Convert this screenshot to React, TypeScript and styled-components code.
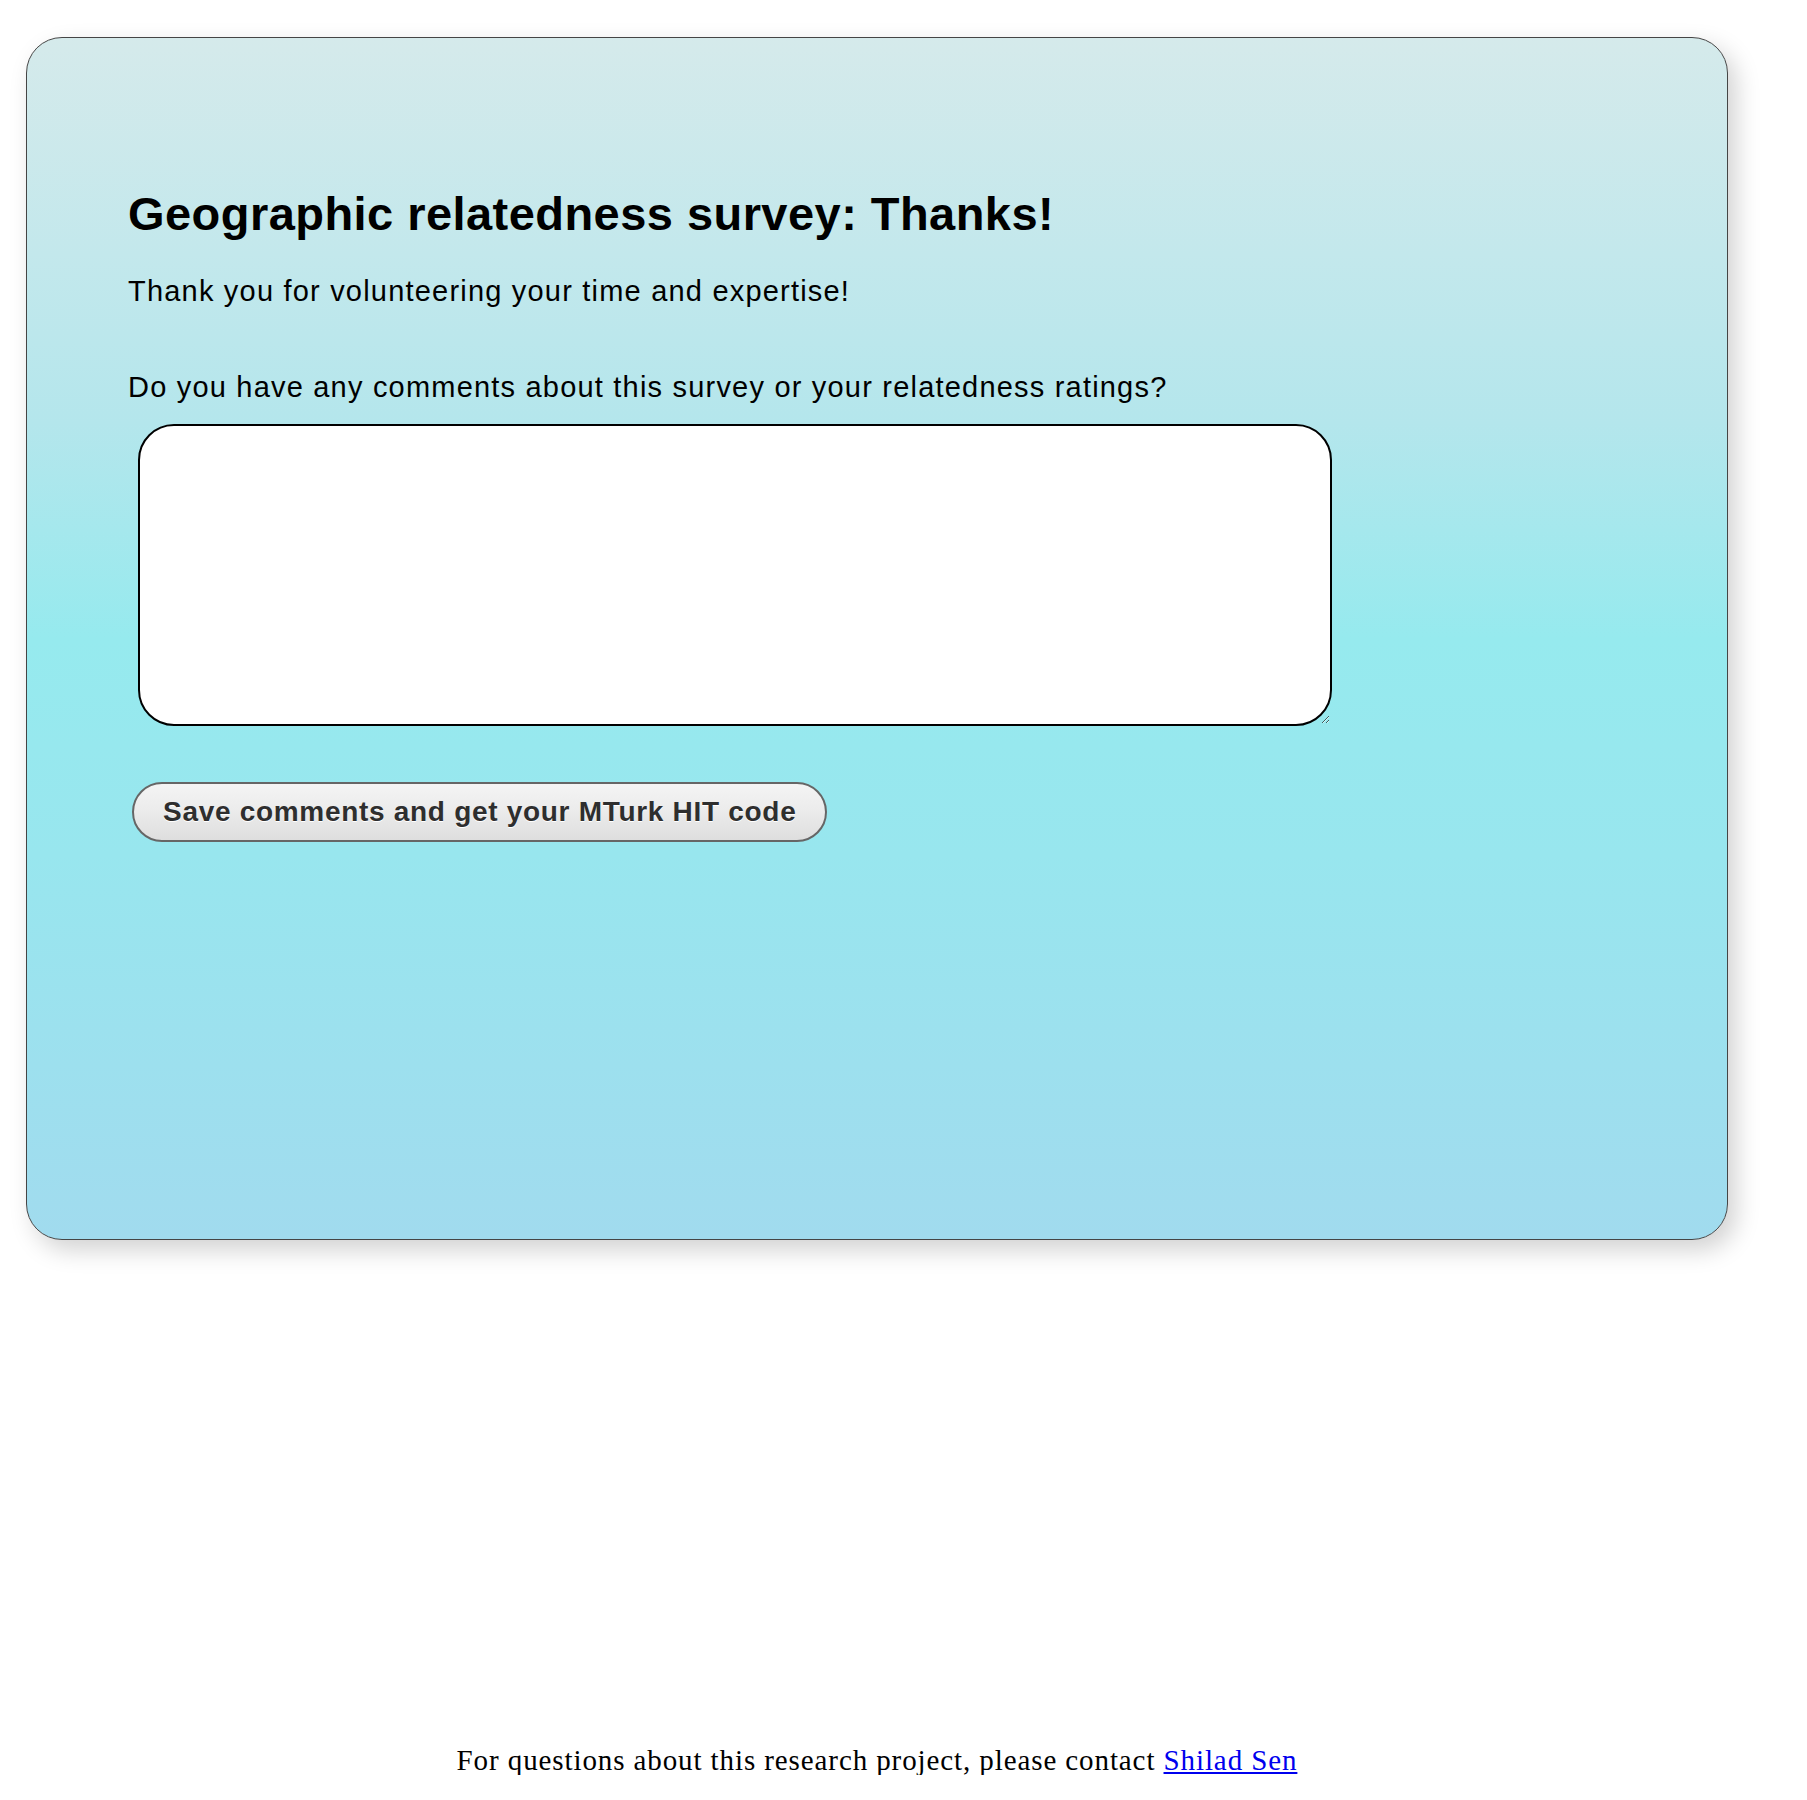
import React from "react";
import styled, { createGlobalStyle } from "styled-components";

const GlobalStyle = createGlobalStyle`
  html, body {
    margin: 0;
    padding: 0;
    background: #ffffff;
  }
  body {
    font-family: "Liberation Serif", "Times New Roman", serif;
  }
`;

const Page = styled.div`
  width: 1702px;
  margin-left: 26px;
  padding-top: 37px;
  display: flex;
  flex-direction: column;
`;

const Card = styled.main`
  box-sizing: border-box;
  width: 1702px;
  height: 1203px;
  border: 1px solid #454545;
  border-radius: 36px;
  background: linear-gradient(
    to bottom,
    #d5eaeb 0%,
    #c3e8ec 18%,
    #b4e6ec 32%,
    #96eaee 50%,
    #98e6ee 68%,
    #a1dbee 100%
  );
  box-shadow: 8px 10px 24px rgba(0, 0, 0, 0.18);
  padding: 152px 0 0 101px;
  display: flex;
  flex-direction: column;
  align-items: flex-start;
  font-family: "Liberation Sans", Arial, Helvetica, sans-serif;
  color: #000;
`;

const Title = styled.h1`
  margin: 0;
  font-size: 47px;
  line-height: 1;
  font-weight: bold;
  letter-spacing: 0.45px;
`;

const Text = styled.p<{ $gap: number }>`
  margin: ${(p) => p.$gap}px 0 0 0;
  font-size: 29px;
  line-height: 1;
  letter-spacing: 1.2px;
`;

const Comments = styled.textarea`
  box-sizing: border-box;
  margin: 22px 0 0 10px;
  width: 1194px;
  height: 302px;
  border: 2px solid #000;
  border-radius: 36px;
  background: #fff;
  padding: 12px 20px;
  font-family: "Liberation Sans", Arial, sans-serif;
  font-size: 24px;
  outline: none;
`;

const SaveButton = styled.button`
  box-sizing: border-box;
  margin: 56px 0 0 4px;
  height: 60px;
  padding: 0 29px;
  border: 2px solid #666;
  border-radius: 30px;
  background: linear-gradient(to bottom, #f4f4f4 0%, #ececec 45%, #dedede 100%);
  font-family: "Liberation Sans", Arial, sans-serif;
  font-weight: bold;
  font-size: 28px;
  line-height: 1;
  letter-spacing: 0.7px;
  color: #2e2e2e;
  text-shadow: 0 1px 0 #fff;
  cursor: pointer;
`;

const Footer = styled.footer`
  margin-top: 506px;
  text-align: center;
  font-family: "Liberation Serif", "Times New Roman", serif;
  font-size: 29px;
  line-height: 1;
  letter-spacing: 0.9px;
  color: #000;
`;

const Link = styled.a`
  color: #0000ee;
  text-decoration: underline;
`;

export default function App() {
  return (
    <>
      <GlobalStyle />
      <Page>
        <Card>
          <Title>Geographic relatedness survey: Thanks!</Title>
          <Text $gap={40}>Thank you for volunteering your time and expertise!</Text>
          <Text $gap={67}>Do you have any comments about this survey or your relatedness ratings?</Text>
          <Comments />
          <SaveButton type="button">Save comments and get your MTurk HIT code</SaveButton>
        </Card>
        <Footer>
          For questions about this research project, please contact{" "}
          <Link href="#">Shilad Sen</Link>
        </Footer>
      </Page>
    </>
  );
}
